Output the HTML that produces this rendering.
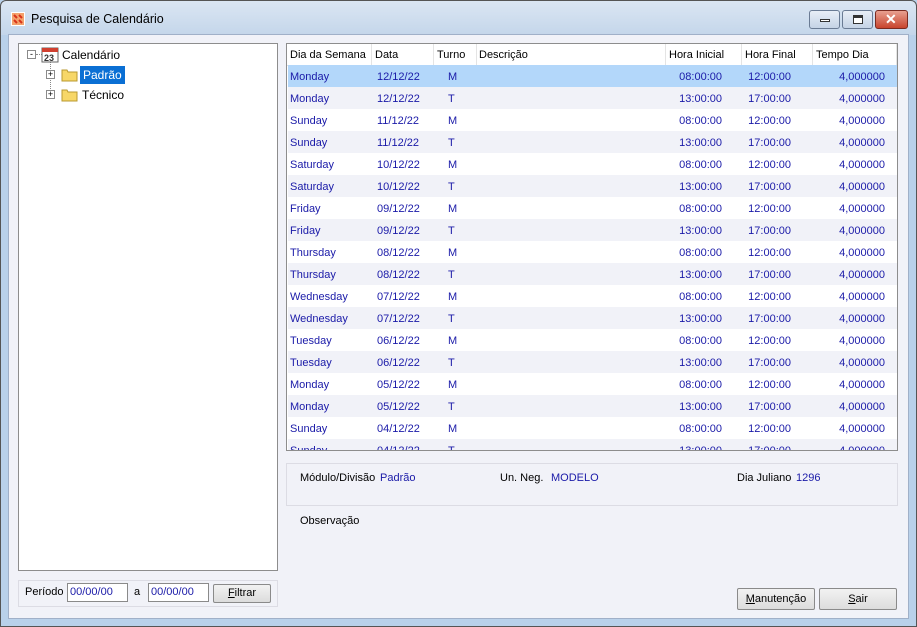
<!DOCTYPE html>
<html><head><style>
*{margin:0;padding:0;box-sizing:border-box}
body{width:917px;height:627px;background:#b9d1ea;font-family:"Liberation Sans",sans-serif;font-size:11px;position:relative;overflow:hidden;color:#000}
.abs{position:absolute}
#win{left:0;top:0;width:917px;height:627px;border:1px solid #555;border-radius:6px 6px 0 0;background:linear-gradient(#dbe6f3,#c4d6ea 34px,#b9d1ea 34px)}
#client{left:8px;top:34px;width:901px;height:585px;background:#f1f2f8;border:1px solid #a0b0c8}
.t{position:absolute;white-space:nowrap}
.blue{color:#1a1aa8}
.box{position:absolute;background:#fff;border:1px solid #8d8d8d}
.row{position:absolute;left:1px;width:609px;height:22px}
.btn{position:absolute;border:1px solid #8a8a8a;background:linear-gradient(#f2f2f2,#dcdcdc);text-align:center;line-height:20px;border-radius:2px}
.inp{position:absolute;background:#fff;border:1px solid #8a8a8a;height:19px;line-height:17px;padding-left:2px;color:#1a1aa8}
.wb{position:absolute;top:10px;height:19px;border:1px solid #6a7b94;border-radius:3px;background:linear-gradient(#e8eef7,#c5d3e6)}
</style></head><body>
<div id="win" class="abs"></div>
<svg class="abs" style="left:11px;top:12px" width="14" height="14"><rect width="14" height="14" fill="#fff"/><rect x="1" y="1" width="12" height="12" fill="#f4a26c"/><path d="M3 3l3 3M8 3l3 3M3 8l3 3M8 8l3 3" stroke="#d8321a" stroke-width="2"/></svg>
<div class="t" style="left:31px;top:12px;font-size:12.5px">Pesquisa de Calendário</div>
<div class="wb" style="left:809px;width:31px"><div class="abs" style="left:10px;top:8px;width:10px;height:3px;border:1px solid #333;background:#fff"></div></div>
<div class="wb" style="left:842px;width:31px"><div class="abs" style="left:10px;top:4px;width:10px;height:9px;border:1px solid #333;border-top-width:3px;background:#fff"></div></div>
<div class="wb" style="left:875px;width:33px;border-color:#7a2a20;background:linear-gradient(#e8a090,#c8442e)"><div class="abs" style="left:9px;top:0;color:#fff;font-weight:bold;font-size:14px;line-height:17px">✕</div></div>
<div id="client" class="abs"></div>

<div class="box" style="left:18px;top:43px;width:260px;height:528px;font-size:12px">
 <div class="abs" style="left:8px;top:6px;width:9px;height:9px;border:1px solid #8a8a8a;background:#fff;font-size:9px;line-height:6px;text-align:center">-</div>
 <div class="abs" style="left:31px;top:17px;height:36px;border-left:1px dotted #888"></div>
 <div class="abs" style="left:17px;top:10px;width:6px;border-top:1px dotted #888"></div>
 <svg class="abs" style="left:22px;top:2px" width="18" height="17"><rect x="1" y="2" width="16" height="14" fill="#fff" stroke="#666"/><rect x="1" y="2" width="16" height="4" fill="#d04030"/><text x="3" y="15" font-size="9" font-weight="bold" font-family="Liberation Sans" fill="#333">23</text></svg>
 <div class="t" style="left:43px;top:4px">Calendário</div>
 <div class="abs" style="left:27px;top:26px;width:9px;height:9px;border:1px solid #8a8a8a;background:#fff;font-size:9px;line-height:7px;text-align:center">+</div>
 <div class="abs" style="left:27px;top:46px;width:9px;height:9px;border:1px solid #8a8a8a;background:#fff;font-size:9px;line-height:7px;text-align:center">+</div>
 <svg class="abs" style="left:42px;top:24px" width="17" height="14"><path d="M1 2h5l1 2h9v9H1z" fill="#f7d768" stroke="#b89a30"/></svg>
 <svg class="abs" style="left:42px;top:44px" width="17" height="14"><path d="M1 2h5l1 2h9v9H1z" fill="#f7d768" stroke="#b89a30"/></svg>
 <div class="t" style="left:61px;top:22px;background:#0a6fd4;color:#fff;padding:2px 3px">Padrão</div>
 <div class="t" style="left:63px;top:44px">Técnico</div>
</div>

<div class="box" style="left:286px;top:43px;width:612px;height:408px;overflow:hidden">
 <div class="abs" style="left:0;top:0;width:612px;height:22px;background:#fff;border-bottom:1px solid #e4e4e4"></div>
 <div class="t" style="left:3px;top:5px">Dia da Semana</div>
 <div class="t" style="left:88px;top:5px">Data</div>
 <div class="t" style="left:150px;top:5px">Turno</div>
 <div class="t" style="left:192px;top:5px">Descrição</div>
 <div class="t" style="left:382px;top:5px">Hora Inicial</div>
 <div class="t" style="left:458px;top:5px">Hora Final</div>
 <div class="t" style="left:529px;top:5px">Tempo Dia</div>
 <div class="abs" style="left:84px;top:0;height:22px;border-left:1px solid #e4e4e4"></div>
 <div class="abs" style="left:146px;top:0;height:22px;border-left:1px solid #e4e4e4"></div>
 <div class="abs" style="left:189px;top:0;height:22px;border-left:1px solid #e4e4e4"></div>
 <div class="abs" style="left:378px;top:0;height:22px;border-left:1px solid #e4e4e4"></div>
 <div class="abs" style="left:454px;top:0;height:22px;border-left:1px solid #e4e4e4"></div>
 <div class="abs" style="left:525px;top:0;height:22px;border-left:1px solid #e4e4e4"></div>
 <div class="abs" style="left:609px;top:0;height:22px;border-left:1px solid #e4e4e4"></div>
 <div id="rows"></div>
</div>
<script>
var d=[["Monday","12/12/22"],["Monday","12/12/22"],["Sunday","11/12/22"],["Sunday","11/12/22"],["Saturday","10/12/22"],["Saturday","10/12/22"],["Friday","09/12/22"],["Friday","09/12/22"],["Thursday","08/12/22"],["Thursday","08/12/22"],["Wednesday","07/12/22"],["Wednesday","07/12/22"],["Tuesday","06/12/22"],["Tuesday","06/12/22"],["Monday","05/12/22"],["Monday","05/12/22"],["Sunday","04/12/22"],["Sunday","04/12/22"]];
var h="";
d.forEach(function(r,i){var m=i%2==0;var bg=i==0?"#b3d7fa":(m?"#fff":"#f1f2f8");
h+='<div class="row blue" style="top:'+(21+i*22)+'px;background:'+bg+'">'+
'<div class="t" style="left:2px;top:6px">'+r[0]+'</div>'+
'<div class="t" style="left:89px;top:6px">'+r[1]+'</div>'+
'<div class="t" style="left:160px;top:6px">'+(m?"M":"T")+'</div>'+
'<div class="t" style="right:175px;top:6px">'+(m?"08:00:00":"13:00:00")+'</div>'+
'<div class="t" style="right:106px;top:6px">'+(m?"12:00:00":"17:00:00")+'</div>'+
'<div class="t" style="right:12px;top:6px">4,000000</div></div>';});
document.getElementById("rows").innerHTML=h;
</script>

<div class="abs" style="left:286px;top:463px;width:612px;height:43px;border:1px solid #dcdce4"></div>
<div class="t" style="left:300px;top:472px">Módulo/Divisão</div>
<div class="t blue" style="left:380px;top:472px">Padrão</div>
<div class="t" style="left:500px;top:472px">Un. Neg.</div>
<div class="t blue" style="left:551px;top:472px">MODELO</div>
<div class="t" style="left:737px;top:472px">Dia Juliano</div>
<div class="t blue" style="left:796px;top:472px">1296</div>
<div class="t" style="left:300px;top:515px">Observação</div>

<div class="abs" style="left:18px;top:580px;width:260px;height:27px;border:1px solid #dcdce4"></div>
<div class="t" style="left:25px;top:586px">Período</div>
<div class="inp" style="left:67px;top:583px;width:61px">00/00/00</div>
<div class="t" style="left:134px;top:586px">a</div>
<div class="inp" style="left:148px;top:583px;width:61px">00/00/00</div>
<div class="btn" style="left:213px;top:584px;width:58px;height:19px;line-height:17px"><u>F</u>iltrar</div>
<div class="btn" style="left:737px;top:588px;width:78px;height:22px"><u>M</u>anutenção</div>
<div class="btn" style="left:819px;top:588px;width:78px;height:22px"><u>S</u>air</div>
</body></html>
